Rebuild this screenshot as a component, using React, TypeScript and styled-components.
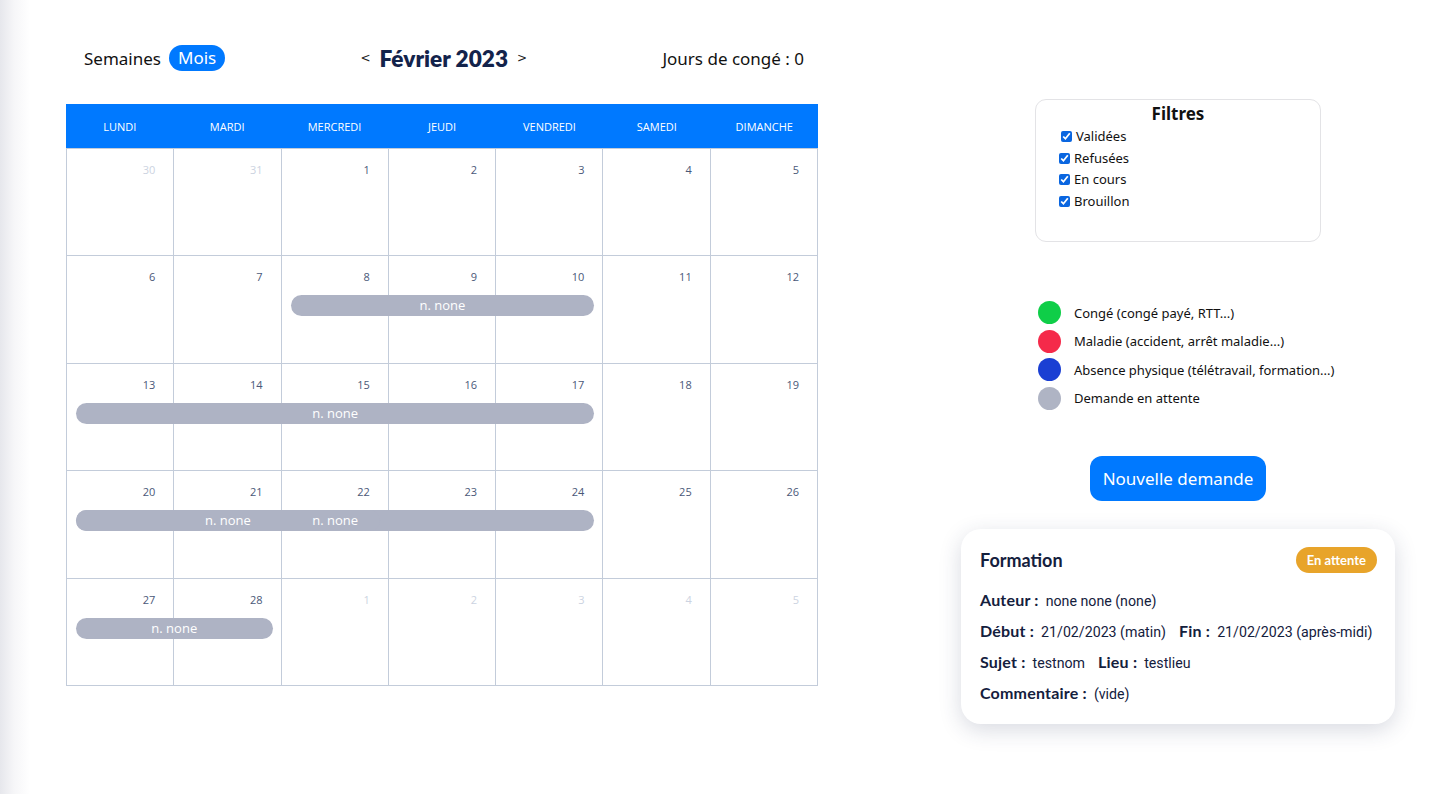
import React from 'react'
import styled, { createGlobalStyle } from 'styled-components'

const GlobalStyle = createGlobalStyle`
  html, body {
    margin: 0;
    padding: 0;
  }
  body {
    background: linear-gradient(to right, #e6e7ec 0, #f6f6f8 14px, #ffffff 30px);
    font-family: "Noto Sans", "Open Sans", sans-serif;
    color: #111;
    min-height: 794px;
  }
`

type CalDay = { n: number; other?: boolean }
type CalEvent = { start: number; span: number; label: string }

const jours = ['Lundi', 'Mardi', 'Mercredi', 'Jeudi', 'Vendredi', 'Samedi', 'Dimanche']

const semaines: { days: CalDay[]; events: CalEvent[] }[] = [
  {
    days: [{ n: 30, other: true }, { n: 31, other: true }, { n: 1 }, { n: 2 }, { n: 3 }, { n: 4 }, { n: 5 }],
    events: [],
  },
  {
    days: [6, 7, 8, 9, 10, 11, 12].map((n) => ({ n })),
    events: [{ start: 2, span: 3, label: 'n. none' }],
  },
  {
    days: [13, 14, 15, 16, 17, 18, 19].map((n) => ({ n })),
    events: [{ start: 0, span: 5, label: 'n. none' }],
  },
  {
    days: [20, 21, 22, 23, 24, 25, 26].map((n) => ({ n })),
    events: [
      { start: 0, span: 5, label: 'n. none' },
      { start: 0, span: 3, label: 'n. none' },
    ],
  },
  {
    days: [{ n: 27 }, { n: 28 }, { n: 1, other: true }, { n: 2, other: true }, { n: 3, other: true }, { n: 4, other: true }, { n: 5, other: true }],
    events: [{ start: 0, span: 2, label: 'n. none' }],
  },
]

const filtres = ['Validées', 'Refusées', 'En cours', 'Brouillon']

const legende = [
  { couleur: '#0fce48', texte: 'Congé (congé payé, RTT...)' },
  { couleur: '#f52a4a', texte: 'Maladie (accident, arrêt maladie...)' },
  { couleur: '#1a3fd3', texte: 'Absence physique (télétravail, formation...)' },
  { couleur: '#afb4c4', texte: 'Demande en attente' },
]

const COL = 100 / 7

const App = () => {
  return (
    <>
      <GlobalStyle />
      <Page>
        <LeftColumn>
          <TopBar>
            <ViewSwitch>
              <ViewOption>Semaines</ViewOption>
              <ViewOption $active>Mois</ViewOption>
            </ViewSwitch>
            <MonthNav>
              <Arrow>&lt;</Arrow>
              <MonthTitle>Février 2023</MonthTitle>
              <Arrow>&gt;</Arrow>
            </MonthNav>
            <Counter>Jours de congé : 0</Counter>
          </TopBar>

          <Calendar>
            <HeaderRow>
              {jours.map((j) => (
                <HeaderCell key={j}>{j}</HeaderCell>
              ))}
            </HeaderRow>
            <Weeks>
              {semaines.map((s, i) => (
                <WeekRow key={i}>
                  {s.days.map((d, k) => (
                    <DayCell key={k}>
                      <DayNumber $other={d.other}>{d.n}</DayNumber>
                    </DayCell>
                  ))}
                  {s.events.map((e, k) => (
                    <EventBar
                      key={k}
                      style={{
                        left: `calc(${e.start * COL}% + 9px)`,
                        width: `calc(${e.span * COL}% - 18px)`,
                      }}
                    >
                      <EventLabel>{e.label}</EventLabel>
                    </EventBar>
                  ))}
                </WeekRow>
              ))}
            </Weeks>
          </Calendar>
        </LeftColumn>

        <RightColumn>
          <FilterBox>
            <FilterTitle>Filtres</FilterTitle>
            {filtres.map((f, i) => (
              <FilterItem key={f} $shift={i === 0}>
                <input type="checkbox" defaultChecked />
                {f}
              </FilterItem>
            ))}
          </FilterBox>

          <Legend>
            {legende.map((l) => (
              <LegendItem key={l.texte}>
                <Dot $color={l.couleur} />
                {l.texte}
              </LegendItem>
            ))}
          </Legend>

          <NewButton type="button">Nouvelle demande</NewButton>

          <RequestCard>
            <CardHead>
              <CardTitle>Formation</CardTitle>
              <Badge>En attente</Badge>
            </CardHead>
            <InfoLine>
              <Label>Auteur :</Label>
              <Value>none none (none)</Value>
            </InfoLine>
            <InfoLine>
              <Label>Début :</Label>
              <Value>21/02/2023 (matin)</Value>
              <Label>Fin :</Label>
              <Value>21/02/2023 (après-midi)</Value>
            </InfoLine>
            <InfoLine>
              <Label>Sujet :</Label>
              <Value>testnom</Value>
              <Label>Lieu :</Label>
              <Value>testlieu</Value>
            </InfoLine>
            <InfoLine>
              <Label>Commentaire :</Label>
              <Value>(vide)</Value>
            </InfoLine>
          </RequestCard>
        </RightColumn>
      </Page>
    </>
  )
}

export default App

/* Mise en page */

const Page = styled.div`
  display: flex;
  align-items: flex-start;
  padding-left: 66px;
`

const LeftColumn = styled.div`
  width: 752px;
  display: flex;
  flex-direction: column;
  padding-top: 44px;
`

const TopBar = styled.div`
  display: flex;
  align-items: center;
  justify-content: space-between;
  height: 28px;
  padding: 0 14px 0 18px;
  margin-bottom: 32px;
`

const ViewSwitch = styled.div`
  display: flex;
  align-items: center;
  gap: 8px;
`

const ViewOption = styled.span<{ $active?: boolean }>`
  font-size: 17px;
  color: ${(p) => (p.$active ? '#fff' : '#111')};
  background: ${(p) => (p.$active ? '#0079ff' : 'transparent')};
  border-radius: 13px;
  padding: ${(p) => (p.$active ? '1px 9px 2px' : '0')};
  line-height: 23px;
`

const MonthNav = styled.div`
  display: flex;
  align-items: center;
  gap: 9px;
`

const Arrow = styled.span`
  font-size: 12px;
  color: #222;
  font-family: "DejaVu Sans", sans-serif;
`

const MonthTitle = styled.h1`
  margin: 0;
  font-family: Lato, "Noto Sans", sans-serif;
  font-weight: 800;
  font-size: 22.6px;
  color: #13234b;
`

const Counter = styled.span`
  font-size: 17px;
  color: #111;
`

/* Calendrier */

const Calendar = styled.div`
  display: flex;
  flex-direction: column;
  width: 752px;
  font-family: "Open Sans", sans-serif;
`

const HeaderRow = styled.div`
  display: grid;
  grid-template-columns: repeat(7, 1fr);
  height: 44px;
  background: #0079ff;
`

const HeaderCell = styled.div`
  display: flex;
  align-items: center;
  justify-content: center;
  color: #fff;
  font-size: 11px;
  text-transform: uppercase;
`

const Weeks = styled.div`
  display: flex;
  flex-direction: column;
  border-top: 1px solid #c3ccda;
  border-left: 1px solid #c3ccda;
`

const WeekRow = styled.div`
  position: relative;
  display: grid;
  grid-template-columns: repeat(7, 1fr);
  height: 107.4px;
`

const DayCell = styled.div`
  border-right: 1px solid #c3ccda;
  border-bottom: 1px solid #c3ccda;
  display: flex;
  justify-content: flex-end;
  align-items: flex-start;
  padding: 13px 18px 0 0;
`

const DayNumber = styled.span<{ $other?: boolean }>`
  font-size: 11px;
  line-height: 15px;
  color: ${(p) => (p.$other ? '#ccd3e1' : '#4a5878')};
`

const EventBar = styled.div`
  position: absolute;
  top: 39px;
  height: 21px;
  color: #fff;
  font-size: 13px;
  line-height: 21px;
  text-align: center;
  white-space: nowrap;

  &::before {
    content: '';
    position: absolute;
    inset: 0;
    border-radius: 11px;
    background: #aeb3c4;
    z-index: 1;
  }
`

const EventLabel = styled.span`
  position: relative;
  z-index: 2;
`

/* Colonne de droite */

const RightColumn = styled.div`
  margin-left: 143px;
  width: 434px;
  display: flex;
  flex-direction: column;
  align-items: center;
  padding-top: 99px;
`

const FilterBox = styled.div`
  box-sizing: border-box;
  width: 286px;
  height: 143px;
  border: 1px solid #e3e3e6;
  border-radius: 11px;
  padding: 3px 0 0 23px;
  display: flex;
  flex-direction: column;
`

const FilterTitle = styled.div`
  font-weight: 700;
  font-size: 17px;
  line-height: 22px;
  text-align: center;
  margin-left: -23px;
  margin-bottom: 1px;
`

const FilterItem = styled.label<{ $shift?: boolean }>`
  display: flex;
  align-items: center;
  gap: 2px;
  font-size: 13px;
  line-height: 21.5px;
  color: #111;
  padding-left: ${(p) => (p.$shift ? '2px' : '0')};

  input {
    margin: 0 2px 0 0;
    width: 11px;
    height: 11px;
    accent-color: #0a66e0;
  }
`

const Legend = styled.div`
  align-self: flex-start;
  margin: 59px 0 0 77px;
  display: flex;
  flex-direction: column;
  gap: 5.5px;
`

const LegendItem = styled.div`
  display: flex;
  align-items: center;
  gap: 13px;
  font-size: 13px;
  color: #111;
`

const Dot = styled.span<{ $color: string }>`
  width: 23px;
  height: 23px;
  border-radius: 50%;
  background: ${(p) => p.$color};
  flex-shrink: 0;
`

const NewButton = styled.button`
  margin-top: 46px;
  height: 45px;
  padding: 0 13px;
  border: none;
  border-radius: 12px;
  background: #0079ff;
  color: #fff;
  font-family: "Noto Sans", sans-serif;
  font-size: 17px;
  cursor: pointer;
`

const RequestCard = styled.div`
  box-sizing: border-box;
  margin-top: 28px;
  width: 434px;
  height: 195px;
  background: #fff;
  border-radius: 20px;
  box-shadow: 0 6px 22px rgba(40, 50, 90, 0.18);
  padding: 18px 16px 0 19px;
  display: flex;
  flex-direction: column;
  color: #14203d;
`

const CardHead = styled.div`
  display: flex;
  justify-content: space-between;
  align-items: center;
  margin-bottom: 17px;
  padding-right: 2px;
`

const CardTitle = styled.div`
  font-family: Lato, sans-serif;
  font-weight: 700;
  font-size: 18px;
`

const Badge = styled.span`
  background: #e8a42a;
  color: #fff;
  font-family: Lato, sans-serif;
  font-weight: 700;
  font-size: 13px;
  border-radius: 14px;
  padding: 5px 11px;
`

const InfoLine = styled.div`
  display: flex;
  align-items: baseline;
  height: 31px;
  white-space: nowrap;
`

const Label = styled.span`
  font-family: Lato, sans-serif;
  font-weight: 700;
  font-size: 16px;
  letter-spacing: 0.2px;
  margin-right: 7px;
  flex-shrink: 0;

  & ~ & {
    margin-left: 13px;
  }
`

const Value = styled.span`
  font-family: Roboto, sans-serif;
  font-size: 14.2px;
  flex-shrink: 0;
`
